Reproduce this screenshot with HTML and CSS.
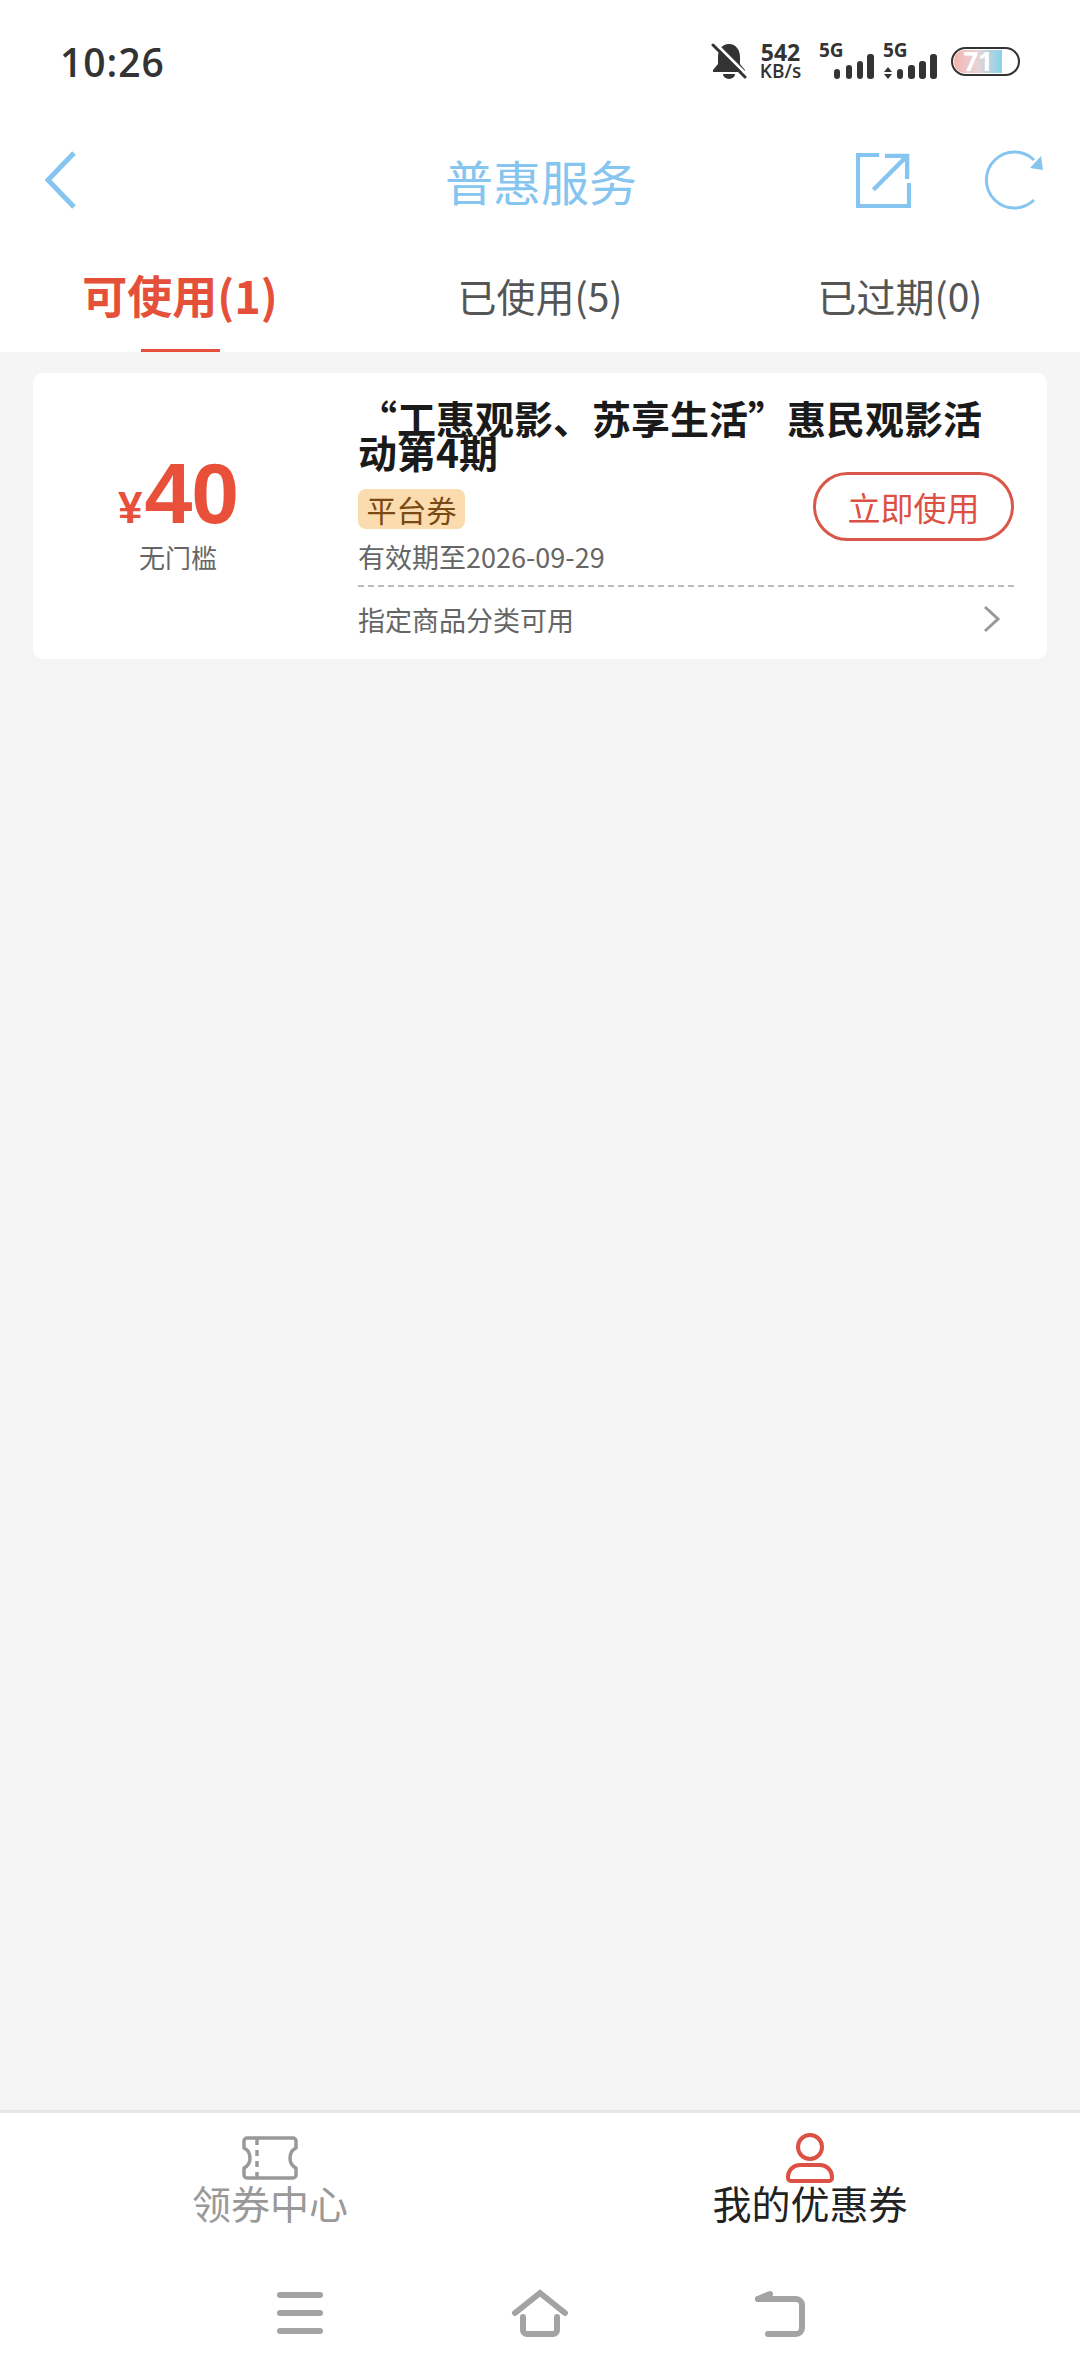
FILE: index.html
```html
<!DOCTYPE html>
<html lang="zh-CN">

<head>
    <meta charset="UTF-8">
    <meta name="viewport" content="width=device-width, initial-scale=1.0">
    <title>普惠服务</title>
    <link rel="stylesheet" href="styles.css">
</head>

<body>
    <div class="page">
        <div class="status-bar">
            <span class="time">10:26</span>
            <div class="status-icons">
                <svg class="bell" viewBox="0 0 36 36">
                    <path d="M18 1c-7 0-11 6-11 13v7l-5 6v2h32v-2l-5-6v-7c0-7-4-13-11-13Z" fill="#333" />
                    <path d="M12 31a6 5 0 0 0 12 0Z" fill="#333" />
                    <path d="M4 0 36 32" stroke="#fff" stroke-width="3" />
                    <path d="M2 2 34 34" stroke="#333" stroke-width="3" stroke-linecap="round" />
                </svg>
                <div class="speed">
                    <span class="speed-num">542</span>
                    <span class="speed-unit">KB/s</span>
                </div>
                <svg class="signal" viewBox="0 0 56 36">
                    <text x="0" y="14" class="signal-text">5G</text>
                    <rect x="15" y="26" width="6" height="10" rx="3" fill="#333" />
                    <rect x="27" y="22" width="6" height="14" rx="3" fill="#333" />
                    <rect x="38" y="18" width="6" height="18" rx="3" fill="#333" />
                    <rect x="48" y="11" width="7" height="25" rx="3" fill="#333" />
                </svg>
                <svg class="signal" viewBox="0 0 56 36">
                    <text x="0" y="14" class="signal-text">5G</text>
                    <path d="M1 29 5 24 9 29ZM1 31 5 36 9 31Z" fill="#333" />
                    <rect x="14" y="26" width="6" height="10" rx="3" fill="#333" />
                    <rect x="25" y="22" width="7" height="14" rx="3" fill="#333" />
                    <rect x="36" y="18" width="7" height="18" rx="3" fill="#333" />
                    <rect x="47" y="11" width="7" height="25" rx="3" fill="#333" />
                </svg>
                <div class="battery">
                    <div class="battery-fill">71</div>
                </div>
            </div>
        </div>

        <div class="nav-bar">
            <svg class="nav-back" viewBox="0 0 32 60">
                <path d="M29 3 3 30 29 57" />
            </svg>
            <h1 class="nav-title">普惠服务</h1>
            <svg class="nav-share" viewBox="0 0 57 57">
                <path d="M24 2H2V55H55V31" />
                <path d="M18 38 53 3M30 3H53V27" />
            </svg>
            <svg class="nav-refresh" viewBox="0 0 60 60">
                <path d="M50 50A28 28 0 1 1 50 10" />
                <path class="arrow-head" d="M59 20 46 18 57 6Z" />
            </svg>
        </div>

        <div class="tabs">
            <div class="tab active">可使用(1)</div>
            <div class="tab">已使用(5)</div>
            <div class="tab">已过期(0)</div>
        </div>

        <div class="content">
            <div class="coupon">
                <div class="coupon-left">
                    <div class="price"><span class="yen">¥</span>40</div>
                    <div class="limit">无门槛</div>
                </div>
                <div class="coupon-right">
                    <div class="coupon-title">“工惠观影、苏享生活”惠民观影活动第4期</div>
                    <div class="coupon-mid">
                        <div>
                            <span class="tag">平台券</span>
                            <div class="date">有效期至2026-09-29</div>
                        </div>
                        <button class="use-btn">立即使用</button>
                    </div>
                    <div class="coupon-foot">
                        <span>指定商品分类可用</span>
                        <svg class="foot-arrow" viewBox="0 0 18 28">
                            <path d="M2 2 15 14 2 26" />
                        </svg>
                    </div>
                </div>
            </div>
        </div>

        <div class="bottom-tabs">
            <div class="bottom-tab">
                <svg class="bottom-icon" viewBox="0 0 56 50">
                    <g fill="none" stroke="#999" stroke-width="3.5" stroke-linejoin="round">
                        <path d="M5 5H51a3 3 0 0 1 3 3V15c-4 2-6 6-6 10s2 8 6 10V42a3 3 0 0 1-3 3H5a3 3 0 0 1-3-3V35c4-2 6-6 6-10S6 17 2 15V8a3 3 0 0 1 3-3Z" />
                        <path d="M15 6V45" stroke-dasharray="6 5" />
                    </g>
                </svg>
                <span>领券中心</span>
            </div>
            <div class="bottom-tab active">
                <svg class="bottom-icon" viewBox="0 0 56 50">
                    <g fill="none" stroke="#dd5044" stroke-width="4">
                        <circle cx="28" cy="14" r="12" />
                        <path d="M18 32H38a12 12 0 0 1 12 12v1a3 3 0 0 1-3 3H9a3 3 0 0 1-3-3v-1a12 12 0 0 1 12-12Z" />
                    </g>
                </svg>
                <span>我的优惠券</span>
            </div>
        </div>

        <div class="system-nav">
            <svg class="system-icon" viewBox="0 0 60 50">
                <path d="M10 7H50M10 25H50M10 43H50" />
            </svg>
            <svg class="system-icon" viewBox="0 0 60 50">
                <path d="M5 25 30 5 55 25" />
                <path d="M13 29V42a4 4 0 0 0 4 4H43a4 4 0 0 0 4-4V29" />
            </svg>
            <svg class="system-icon" viewBox="0 0 60 50">
                <path d="M8 11H46a6 6 0 0 1 6 6V40a6 6 0 0 1-6 6H18" />
                <path d="M8 11 20 6" />
            </svg>
        </div>
    </div>
</body>

</html>
```

FILE: styles.css
```css
* {
    box-sizing: border-box;
}

body {
    margin: 0;
    padding: 0;
    background-color: #fff;
    font-family: "Noto Sans CJK SC", "Noto Sans", sans-serif;
}

.page {
    width: 1080px;
    height: 2376px;
    display: flex;
    flex-direction: column;
    overflow: hidden;
}

/* status bar */
.status-bar {
    height: 120px;
    flex-shrink: 0;
    display: flex;
    align-items: center;
    justify-content: space-between;
    padding: 2px 60px 0 60px;
}

.time {
    font-family: "Open Sans", sans-serif;
    font-size: 39px;
    font-weight: 600;
    color: #333;
    letter-spacing: 1px;
}

.status-icons {
    display: flex;
    align-items: center;
    gap: 8px;
}

.bell {
    width: 36px;
    height: 36px;
    margin-right: 3px;
}

.speed {
    display: flex;
    flex-direction: column;
    align-items: center;
    width: 45px;
    margin-right: 8px;
    font-family: "Open Sans", sans-serif;
    color: #333;
}

.speed-num {
    font-size: 23px;
    font-weight: 700;
    line-height: 20px;
}

.speed-unit {
    font-size: 19px;
    font-weight: 600;
    line-height: 18px;
}

.signal {
    width: 56px;
    height: 36px;
    overflow: visible;
}

.signal-text {
    font-family: "Open Sans", sans-serif;
    font-size: 19px;
    font-weight: 700;
    fill: #333;
}

.battery {
    width: 69px;
    height: 29px;
    margin-left: 4px;
    border: 2.5px solid #333;
    border-radius: 15px;
    padding: 1px;
}

.battery-fill {
    width: 48px;
    height: 100%;
    border-radius: 10px 0 0 10px;
    display: flex;
    align-items: center;
    justify-content: center;
    background: linear-gradient(to right, #f4b5b0, #e6d4d6, #86d2ec);
    font-family: "Open Sans", sans-serif;
    font-size: 26px;
    font-weight: 700;
    line-height: 22px;
    color: #fff;
}

/* header */
.nav-bar {
    height: 120px;
    flex-shrink: 0;
    display: flex;
    align-items: center;
    padding-left: 45px;
}

.nav-bar svg path {
    fill: none;
    stroke: #85c5ef;
}

.nav-back {
    width: 32px;
    height: 60px;
    stroke-width: 5;
}

.nav-title {
    width: 192px;
    margin: 0 0 0 368px;
    font-size: 48px;
    font-weight: 400;
    white-space: nowrap;
    color: #85c5ef;
}

.nav-share {
    width: 55px;
    height: 55px;
    margin-left: 219px;
    stroke-width: 4.5;
}

.nav-refresh {
    width: 60px;
    height: 60px;
    margin-left: 73px;
    stroke-width: 3;
}

.nav-bar svg .arrow-head {
    fill: #85c5ef;
    stroke: none;
}

/* tabs */
.tabs {
    height: 112px;
    flex-shrink: 0;
    display: grid;
    grid-template-columns: repeat(3, 1fr);
}

.tab {
    position: relative;
    display: flex;
    align-items: center;
    justify-content: center;
    padding-bottom: 3px;
    font-size: 39px;
    color: #555;
}

.tab.active {
    font-size: 45px;
    font-weight: 700;
    color: #e4503a;
}

.tab.active::after {
    content: "";
    position: absolute;
    left: 141px;
    bottom: 0;
    width: 79px;
    height: 3px;
    background-color: #e4503a;
}

/* coupon list */
.content {
    flex: 1;
    background-color: #f5f5f5;
    padding: 21px 33px 0;
}

.coupon {
    display: flex;
    height: 286px;
    background-color: #fff;
    border-radius: 10px;
}

.coupon-left {
    width: 290px;
    flex-shrink: 0;
    display: flex;
    flex-direction: column;
    align-items: center;
    padding-top: 80px;
}

.price {
    font-family: "Liberation Sans", sans-serif;
    font-size: 86px;
    font-weight: 700;
    line-height: 80px;
    letter-spacing: -1px;
    color: #e8503a;
}

.yen {
    font-size: 44px;
    margin-right: 3px;
}

.limit {
    margin-top: -9px;
    font-size: 26px;
    line-height: 36px;
    color: #666;
}

.coupon-right {
    flex: 1;
    margin-left: 35px;
    padding: 27px 33px 0 0;
}

.coupon-title {
    font-size: 39px;
    font-weight: 700;
    line-height: 34px;
    color: #1a1a1a;
}

.coupon-mid {
    display: flex;
    align-items: flex-start;
    justify-content: space-between;
    margin-top: 21px;
    padding-bottom: 10px;
    border-bottom: 2px dashed #bbb;
}

.tag {
    display: block;
    width: 107px;
    height: 40px;
    border-radius: 8px;
    background-color: #fbdcae;
    font-size: 30px;
    line-height: 40px;
    text-align: center;
    color: #7a4a14;
}

.date {
    margin-top: 10px;
    font-size: 27px;
    line-height: 36px;
    color: #666;
}

.use-btn {
    width: 201px;
    height: 69px;
    margin-top: -17px;
    border: 3px solid #d9574a;
    border-radius: 35px;
    background-color: #fff;
    font-family: inherit;
    font-size: 33px;
    color: #dd5044;
}

.coupon-foot {
    display: flex;
    align-items: center;
    justify-content: space-between;
    height: 64px;
    padding-right: 13px;
    font-size: 27px;
    color: #666;
}

.foot-arrow {
    width: 18px;
    height: 28px;
}

.foot-arrow path {
    fill: none;
    stroke: #999;
    stroke-width: 3;
}

/* bottom tabs */
.bottom-tabs {
    flex-shrink: 0;
    display: grid;
    grid-template-columns: 1fr 1fr;
    height: 116px;
    padding-top: 20px;
    border-top: 3px solid #e6e6e6;
}

.bottom-tab {
    display: flex;
    flex-direction: column;
    align-items: center;
    font-size: 39px;
    line-height: 44px;
    color: #999;
}

.bottom-tab span {
    margin-top: -3px;
}

.bottom-tab.active {
    color: #222;
}

.bottom-icon {
    width: 56px;
    height: 50px;
}

/* android nav */
.system-nav {
    flex-shrink: 0;
    height: 150px;
    display: grid;
    grid-template-columns: repeat(3, 240px);
    justify-content: center;
    justify-items: center;
    align-items: start;
    padding-top: 62px;
}

.system-icon {
    width: 60px;
    height: 50px;
}

.system-icon path {
    fill: none;
    stroke: #a3a3a3;
    stroke-width: 6;
    stroke-linecap: round;
}
```
